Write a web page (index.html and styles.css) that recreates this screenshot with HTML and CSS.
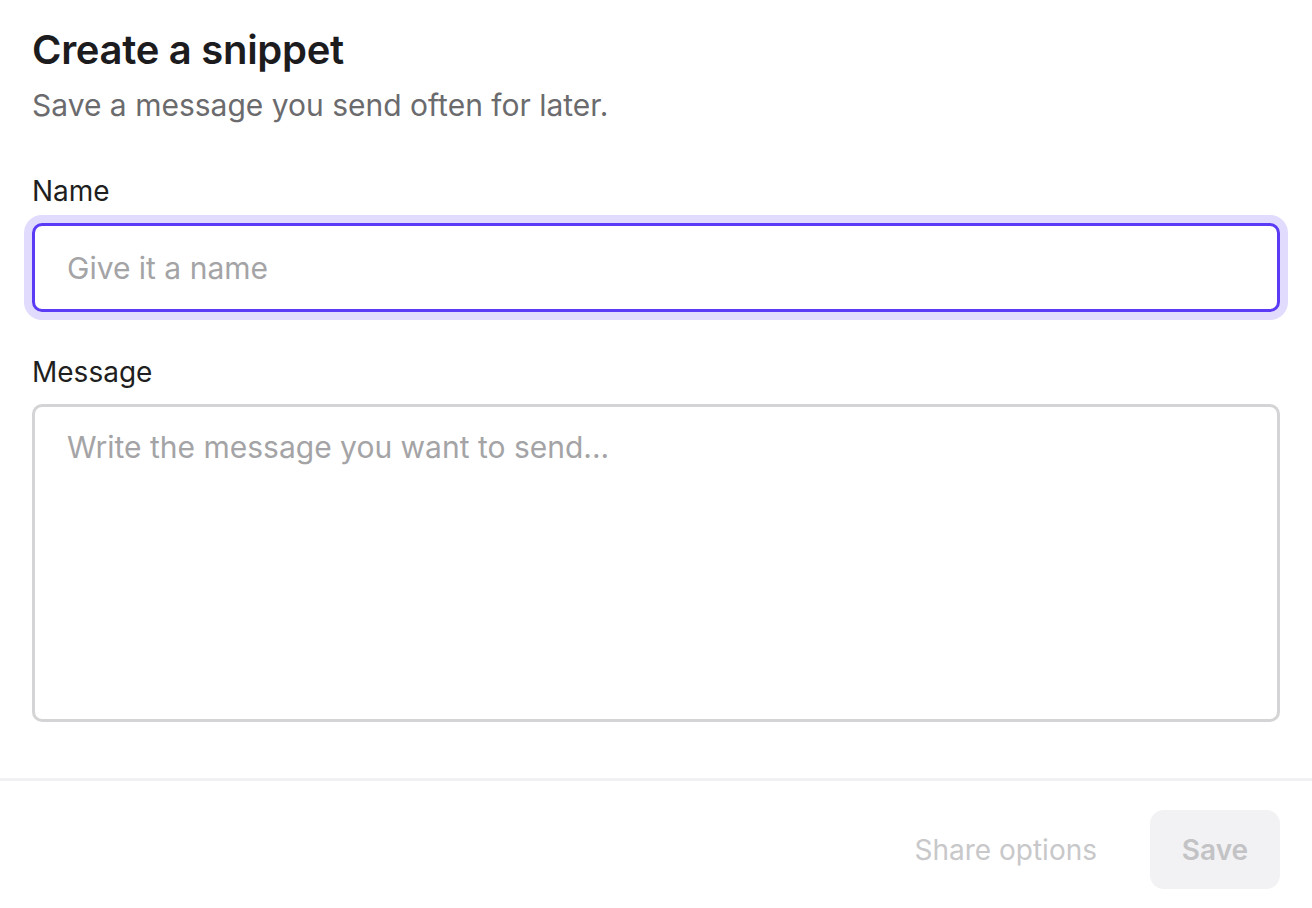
FILE: index.html
```html
<!DOCTYPE html>
<html lang="en">
<head>
    <meta charset="UTF-8">
    <meta name="viewport" content="width=device-width, initial-scale=1.0">
    <link rel="stylesheet" href="styles.css">
</head>
<body>

    <div class="dialog">
        <div class="dialog__body">
            <h1 class="dialog__title">Create a snippet</h1>
            <p class="dialog__subtitle">Save a message you send often for later.</p>

            <label class="field__label" for="snippetName">Name</label>
            <input class="field__input field__input--focused" id="snippetName" type="text" placeholder="Give it a name">

            <label class="field__label field__label--spaced" for="snippetMessage">Message</label>
            <textarea class="field__textarea" id="snippetMessage" placeholder="Write the message you want to send..."></textarea>
        </div>

        <!-- Footer actions -->
        <div class="dialog__footer">
            <button class="btn btn--ghost" type="button">Share options</button>
            <button class="btn btn--save" type="button" disabled>Save</button>
        </div>
    </div>

</body>
</html>
```

FILE: styles.css
```css
body {
    font-family: 'Inter', 'Noto Sans', sans-serif;
    margin: 0;
    padding: 0;
    background-color: #fff;
    color: #1c1c1e;
}

.dialog {
    display: flex;
    flex-direction: column;
}

.dialog__body {
    display: flex;
    flex-direction: column;
    padding: 26px 32px 0 32px;
}

.dialog__title {
    font-size: 40px;
    font-weight: 600;
    line-height: 48px;
    letter-spacing: -0.3px;
    margin: 0;
}

.dialog__subtitle {
    font-size: 30px;
    line-height: 40px;
    color: #6b6b6e;
    margin: 11px 0 0 0;
}

.field__label {
    font-size: 28px;
    line-height: 36px;
    color: #1f1f21;
    margin-top: 48px;
    margin-bottom: 14px;
}

.field__label--spaced {
    margin-top: 42px;
}

.field__input,
.field__textarea {
    font-family: inherit;
    font-size: 30px;
    color: #1c1c1e;
    border: 3px solid #d4d4d6;
    border-radius: 10px;
    background-color: #fff;
    box-sizing: border-box;
    width: 100%;
    outline: none;
    margin: 0;
}

.field__input {
    height: 89px;
    padding: 0 32px;
}

.field__input--focused {
    border-color: #5b3bf5;
    box-shadow: 0 0 0 8px #e1dbfd;
}

.field__textarea {
    height: 318px;
    padding: 20px 32px;
    line-height: 40px;
    resize: none;
}

.field__input::placeholder,
.field__textarea::placeholder {
    color: #a4a4a6;
}

.dialog__footer {
    margin-top: 56px;
    border-top: 3px solid #f1f1f3;
    display: flex;
    justify-content: flex-end;
    align-items: center;
    gap: 29px;
    padding: 29px 32px 0 32px;
}

.btn {
    font-family: inherit;
    font-size: 28px;
    border: none;
    background: none;
    height: 79px;
    cursor: pointer;
}

.btn--ghost {
    color: #c8c8ca;
    padding: 0 24px;
}

.btn--save {
    font-weight: 600;
    color: #c3c3c6;
    background-color: #f2f2f4;
    border-radius: 14px;
    padding: 0;
    width: 130px;
}
```
